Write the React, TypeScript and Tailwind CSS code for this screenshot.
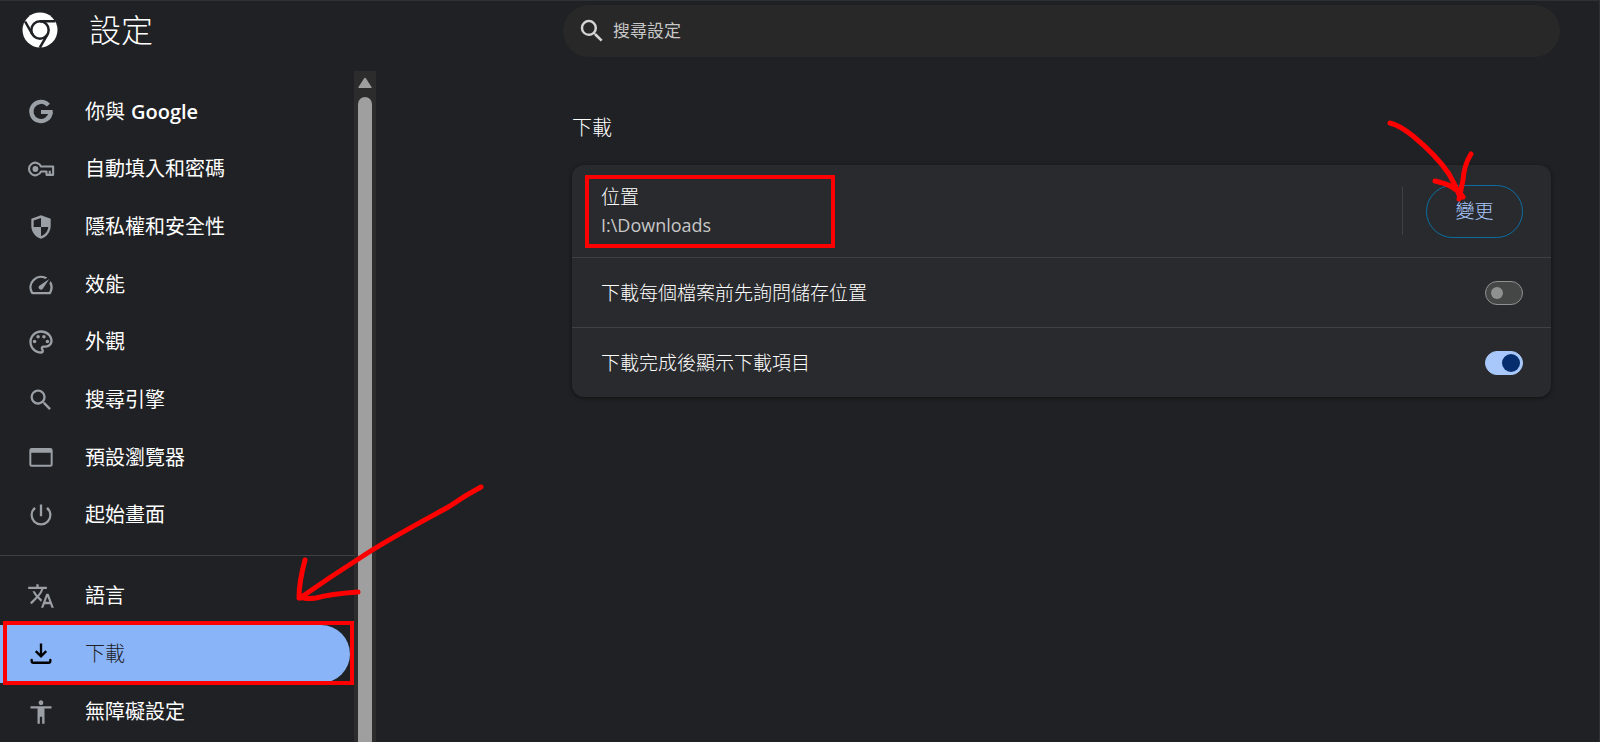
import React, { useState } from 'react';
import { MdAccessibility, MdOutlinePalette, MdPowerSettingsNew, MdSearch, MdTranslate } from 'react-icons/md';

const GoogleIcon = () => (
  <svg viewBox="0 0 24 24" className="size-7" fill="none" stroke="currentColor" strokeWidth="3.600">
    <path d="M18.300 6.100A8.300 8.300 0 1 0 20.300 12.200" />
    <path d="M12 12H22" strokeWidth="3.400" />
  </svg>
);

const KeyIcon = () => (
  <svg viewBox="0 0 24 24" className="size-7" fill="none" stroke="currentColor" strokeWidth="1.800">
    <path d="M12.100 9.900A5.400 5.400 0 1 0 12.100 14.100H16.700V17H22.400V9.900Z" strokeLinejoin="round" />
    <path d="M19.500 13.500V17" />
    <circle cx="7.200" cy="12" r="2.500" fill="currentColor" stroke="none" />
  </svg>
);

const ShieldIcon = () => (
  <svg viewBox="0 0 24 24" className="size-7" fill="currentColor">
    <path
      fillRule="evenodd"
      d="M12 2L3.700 5V11.100C3.700 16.150 7.310 20.850 12 22C16.690 20.850 20.300 16.150 20.300 11.100V5ZM12 4.200V12H5.700V6.400ZM12 12H18.300C17.800 15.600 15.500 18.700 12 19.900Z"
    />
  </svg>
);

const SpeedIcon = () => (
  <svg viewBox="0 0 24 24" className="size-7" fill="currentColor">
    <path d="m20.380 8.570-1.230 1.850a8 8 0 0 1-.22 7.580H5.070A8 8 0 0 1 15.580 6.850l1.850-1.230A10 10 0 0 0 3.350 19a2 2 0 0 0 1.720 1h13.850a2 2 0 0 0 1.740-1 10 10 0 0 0-.27-10.440zm-9.790 6.840a2 2 0 0 0 2.830 0l5.660-8.490-8.490 5.660a2 2 0 0 0 0 2.830z" />
  </svg>
);

const BrowserIcon = () => (
  <svg viewBox="0 0 24 24" className="size-7" fill="currentColor">
    <path
      fillRule="evenodd"
      d="M4 3.500H20A2 2 0 0 1 22 5.500V17.500A2 2 0 0 1 20 19.500H4A2 2 0 0 1 2 17.500V5.500A2 2 0 0 1 4 3.500ZM3.700 7.500V17.800H20.300V7.500Z"
    />
  </svg>
);

const DownloadIcon = () => (
  <svg viewBox="0 0 24 24" className="size-7" fill="none" stroke="currentColor" strokeWidth="2">
    <path d="M12 3V13.500M7.500 9.500L12 14L16.500 9.500" />
    <path d="M4 17V18Q4 19.500 5.500 19.500H18.500Q20 19.500 20 18V17" strokeLinecap="round" />
  </svg>
);

const ChromeLogo = () => (
  <svg viewBox="0 0 36 36" className="size-9">
    <circle cx="18" cy="18" r="17.500" fill="#fff" />
    <g fill="none" stroke="#202124" strokeWidth="2.500">
      <circle cx="18" cy="18" r="8.700" />
      <path d="M18 9.300H33M10.470 22.350L3.100 9.500M25.530 22.350L17.800 35.700" />
    </g>
  </svg>
);

const mainLinks = [
  { label: '你與', bold: 'Google', icon: <GoogleIcon /> },
  { label: '自動填入和密碼', icon: <KeyIcon /> },
  { label: '隱私權和安全性', icon: <ShieldIcon /> },
  { label: '效能', icon: <SpeedIcon /> },
  { label: '外觀', icon: <MdOutlinePalette className="size-7" /> },
  { label: '搜尋引擎', icon: <MdSearch className="size-7" /> },
  { label: '預設瀏覽器', icon: <BrowserIcon /> },
  { label: '起始畫面', icon: <MdPowerSettingsNew className="size-7" /> },
];

const moreLinks = [
  { label: '語言', icon: <MdTranslate className="size-7" /> },
  { label: '下載', icon: <DownloadIcon />, active: true },
  { label: '無障礙設定', icon: <MdAccessibility className="size-7" /> },
];

type LinkProps = { label: string; bold?: string; icon: React.ReactNode; active?: boolean };

const SideLink: React.FC<LinkProps> = ({ label, bold, icon, active }) => (
  <a
    href="#"
    className={`relative flex items-center gap-[30px] pl-[27px] text-xl leading-7 ${
      active ? 'mr-1 rounded-r-full bg-[#8ab4f8] font-light text-[#202124]' : 'text-white'
    }`}
  >
    <span className={active ? 'text-black' : 'text-[#9aa0a6]'}>{icon}</span>
    <span>
      {label}
      {bold && <b className="ml-1.5 font-semibold">{bold}</b>}
    </span>
    {active && <span className="absolute -top-1 -right-1 -bottom-0.5 left-[3px] border-4 border-[#f00]" />}
  </a>
);

type ToggleProps = { id: string; label: string; initial: boolean };

const ToggleRow: React.FC<ToggleProps> = ({ id, label, initial }) => {
  const [on, setOn] = useState(initial);
  return (
    <div className="flex h-[70px] items-center justify-between border-t border-[#3f4042] pr-7 pl-[29px]">
      <label htmlFor={id}>{label}</label>
      <input
        id={id}
        type="checkbox"
        role="switch"
        checked={on}
        onChange={(e) => setOn(e.target.checked)}
        className="flex h-6 w-[38px] appearance-none items-center rounded-full border border-[#8e918f] bg-[#444746] px-[5px] before:size-3 before:rounded-full before:bg-[#8e918f] checked:justify-end checked:border-[#a8c7fa] checked:bg-[#a8c7fa] checked:px-0.5 checked:before:size-[18px] checked:before:bg-[#062e6f]"
      />
    </div>
  );
};

const App: React.FC = () => {
  return (
    <div className="relative flex h-screen overflow-hidden border-t border-r border-[#2f3033] bg-[#202124] font-['Open_Sans','Noto_Sans_CJK_TC',sans-serif] text-[#e3e3e3]">
      <aside className="flex w-[376px] shrink-0 flex-col">
        <header className="flex h-[70px] shrink-0 items-start gap-[31px] pt-[11px] pl-[22px]">
          <ChromeLogo />
          <h1 className="text-[32px] leading-9 font-light text-white">設定</h1>
        </header>
        <div className="flex min-h-0 flex-1">
          <nav className="min-w-0 flex-1 overflow-hidden pt-3">
            <div className="grid h-[461px] auto-rows-fr">
              {mainLinks.map((link) => (
                <SideLink key={link.label} {...link} />
              ))}
            </div>
            <hr className="mt-[11px] mb-[11px] border-[#3c4043]" />
            <div className="grid auto-rows-[58px]">
              {moreLinks.map((link) => (
                <SideLink key={link.label} {...link} />
              ))}
            </div>
          </nav>
          <div className="flex w-[22px] flex-col items-center bg-[#2c2c2c] pt-1.5">
            <svg viewBox="0 0 14 12" className="h-3 w-3.5 shrink-0" fill="#9f9f9f">
              <path d="M1 11Q0 11 .5 10L6 1.500Q7 0 8 1.500L13.500 10Q14 11 13 11Z" />
            </svg>
            <div className="mt-2 w-3.5 flex-1 rounded-t-full bg-[#9f9f9f]" />
          </div>
        </div>
      </aside>

      <main className="min-w-0 flex-1 pt-1 pr-[39px] pl-[187px]">
        <label className="flex h-[52px] items-center gap-1.5 rounded-full bg-[#282828] pl-[14px]">
          <MdSearch className="size-[30px] text-[#d5d5d5]" />
          <input
            type="text"
            aria-label="搜尋設定"
            placeholder="搜尋設定"
            className="flex-1 bg-transparent text-[17px] outline-none placeholder:text-[#c7c7c7]"
          />
        </label>

        <section className="mt-[57px] px-[9px]">
          <h2 className="text-xl leading-7 font-light text-white">下載</h2>
          <div className="mt-[23px] rounded-xl bg-[#292a2d] text-[19px] leading-7 font-light text-white shadow-[0_1px_4px_rgba(0,0,0,0.5)]">
            <div className="flex h-[92px] items-center pr-7 pl-[29px]">
              <div className="relative flex-1">
                <div>位置</div>
                <div className="text-lg leading-7 font-normal text-[#c7c7c7]">I:\Downloads</div>
                <span className="absolute -top-2 -left-4 h-[73px] w-[250px] border-4 border-[#f00]" />
              </div>
              <div className="mr-[23px] h-12 w-px bg-[#3f4042]" />
              <button className="h-[53px] w-[97px] rounded-full border border-[#0b6ea3] text-[#a8c7fa]">變更</button>
            </div>
            <ToggleRow id="ask-location" label="下載每個檔案前先詢問儲存位置" initial={false} />
            <ToggleRow id="show-done" label="下載完成後顯示下載項目" initial={true} />
          </div>
        </section>
      </main>

      {/* hand-drawn arrows */}
      <svg
        viewBox="290 480 200 126"
        className="pointer-events-none absolute top-[479px] left-[290px] h-[126px] w-[200px]"
        fill="none"
        stroke="#f00"
        strokeWidth="5"
        strokeLinecap="round"
        strokeLinejoin="round"
      >
        <path d="M481 487Q464 496 450 506C425 520 385 541 363 556Q330 577 300 598M305 560Q299 582 299 598L301 598M358 592Q330 594 316 598Q308 599 304 598" />
      </svg>
      <svg
        viewBox="1380 110 100 100"
        className="pointer-events-none absolute top-[109px] right-[119px] size-[100px]"
        fill="none"
        stroke="#f00"
        strokeWidth="5"
        strokeLinecap="round"
        strokeLinejoin="round"
      >
        <path d="M1390 123Q1399 125 1413 136Q1437 156 1449 174Q1456 186 1460 197L1463 197M1435 181Q1455 185 1463 197M1471 154Q1464 165 1463 180Q1461 190 1459 199" />
      </svg>
    </div>
  );
};

export default App;
